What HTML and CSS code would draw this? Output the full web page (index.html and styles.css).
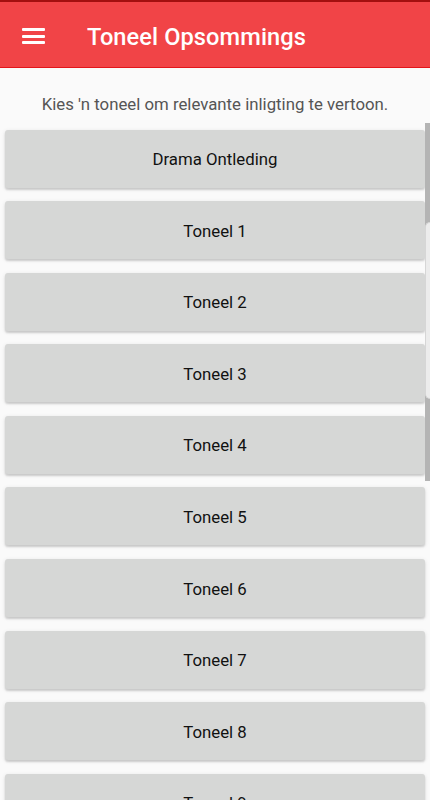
FILE: index.html
```html
<!DOCTYPE html>
<html lang="af">
<head>
  <meta charset="UTF-8" />
  <meta name="viewport" content="width=device-width, initial-scale=1.0"/>
  <title>Toneel Opsommings</title>
  <link rel="stylesheet" href="styles.css">
</head>
<body>

  <!-- Kopstrook -->
  <header class="kop">
    <button class="menu" title="Menu">
      <span></span><span></span><span></span>
    </button>
    <h1>Toneel Opsommings</h1>
  </header>

  <p class="uitleg">Kies 'n toneel om relevante inligting te vertoon.</p>

  <!-- Lys van tonele -->
  <div class="lys-houer">
    <div class="lys">
      <button class="toneel">Drama Ontleding</button>
      <button class="toneel">Toneel 1</button>
      <button class="toneel">Toneel 2</button>
      <button class="toneel">Toneel 3</button>
      <button class="toneel">Toneel 4</button>
      <button class="toneel">Toneel 5</button>
      <button class="toneel">Toneel 6</button>
      <button class="toneel">Toneel 7</button>
      <button class="toneel">Toneel 8</button>
      <button class="toneel">Toneel 9</button>
    </div>
    <div class="rolbalk"></div>
    <div class="handvatsel"></div>
  </div>

</body>
</html>
```

FILE: styles.css
```css
body {
  margin: 0;
  font-family: Roboto, "Noto Sans", Arial, sans-serif;
  background-color: #fafafa;
  height: 800px;
  overflow: hidden;
}

.kop {
  height: 65px;
  display: flex;
  align-items: center;
  background-color: #f14447;
  border-top: 2px solid #a30f0f;
  border-bottom: 1px solid #e3151a;
}

.menu {
  width: 23px;
  height: 16px;
  margin-left: 22px;
  margin-top: 3px;
  padding: 0;
  border: none;
  background: none;
  display: flex;
  flex-direction: column;
  justify-content: space-between;
  cursor: pointer;
}

.menu span {
  display: block;
  height: 3px;
  background-color: #fff;
  border-radius: 1px;
}

.kop h1 {
  margin: 0 0 0 42px;
  padding-top: 5px;
  color: #fff;
  font-size: 23.6px;
  font-weight: 500;
  letter-spacing: 0.1px;
}

.uitleg {
  margin: 0;
  height: 55px;
  padding-top: 26px;
  box-sizing: border-box;
  text-align: center;
  color: #555;
  font-size: 16.8px;
}

.lys-houer {
  position: relative;
  height: 677px;
  overflow: hidden;
}

.lys {
  display: flex;
  flex-direction: column;
  gap: 13.6px;
  padding: 6.5px 5px 0 5px;
}

.toneel {
  height: 58px;
  flex-shrink: 0;
  padding-top: 2px;
  border: none;
  border-radius: 3px;
  background-color: #d6d7d6;
  color: #111;
  font-family: inherit;
  font-size: 16.8px;
  box-shadow: 0 2px 2px rgba(0,0,0,0.14), 0 1px 4px rgba(0,0,0,0.1);
  cursor: pointer;
}

.rolbalk {
  position: absolute;
  top: 0;
  right: 0;
  width: 5px;
  height: 358px;
  background-color: #b4b4b4;
}

.handvatsel {
  position: absolute;
  top: 99px;
  right: 0;
  width: 4px;
  height: 175px;
  background-color: #ececec;
  border: 1px solid #d6d6d6;
  border-right: none;
  border-radius: 6px 0 0 6px;
}
```
